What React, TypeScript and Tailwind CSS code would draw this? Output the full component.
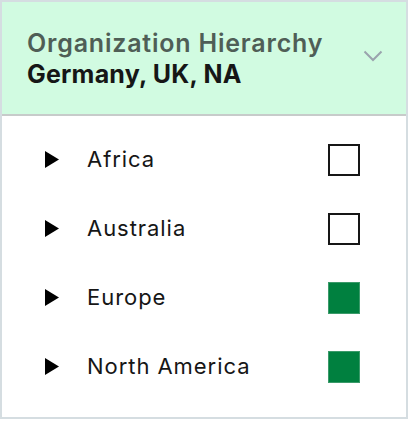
import React from "react";

const rows = [
  { name: "Africa", checked: false },
  { name: "Australia", checked: false },
  { name: "Europe", checked: true },
  { name: "North America", checked: true },
];

export default function App() {
  return (
    <div className="w-[410px] h-[424px] bg-white" style={{ fontFamily: "Inter, 'Noto Sans', sans-serif" }}>
      <div className="w-[408px] h-[419px] border-2 border-[#d5dde1] flex flex-col">
        <div className="h-[114px] bg-[#d1fbe1] border-b-2 border-[#c7cbca] flex items-center pl-[25px] pr-[23px]">
          <div className="flex-1 flex flex-col pt-[1px]">
            <div className="text-[25px] leading-[31px] font-semibold text-[#4f5e56] tracking-[0.8px]">Organization Hierarchy</div>
            <div className="text-[25px] leading-[31px] font-bold text-[#161616] tracking-[0.2px]">Germany, UK, NA</div>
          </div>
          <svg width="20" height="12" viewBox="0 0 20 12" className="mt-[-4px]">
            <path d="M1.5 1.5 L10 10 L18.5 1.5" fill="none" stroke="#9aa3ad" strokeWidth="2" />
          </svg>
        </div>
        <div className="flex-1 bg-white pt-[9px] flex flex-col">
          {rows.map((r) => (
            <div key={r.name} className="h-[69px] flex items-center pl-[43px] pr-[46px]">
              <svg width="14" height="17" viewBox="0 0 14 17" className="shrink-0">
                <path d="M0 0 L14 8.5 L0 17 Z" fill="#000" />
              </svg>
              <span className="ml-[28px] flex-1 text-[22px] text-[#161616] tracking-[0.95px]">{r.name}</span>
              {r.checked ? (
                <div className="w-[32px] h-[32px] bg-[#00803f] border border-[#3b9a6a]" />
              ) : (
                <div className="w-[32px] h-[32px] border-2 border-[#161616] bg-white" />
              )}
            </div>
          ))}
        </div>
      </div>
    </div>
  );
}
